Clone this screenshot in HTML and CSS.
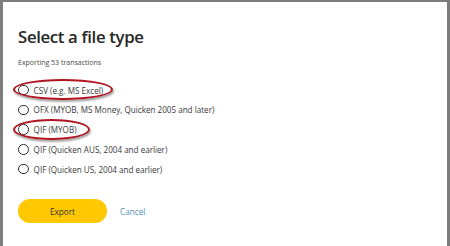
FILE: index.html
```html
<!DOCTYPE html>
<html>
<head>
<meta charset="utf-8">
<link rel="stylesheet" href="styles.css">
</head>
<body>
<div class="backdrop">
  <div class="modal">
    <h1 class="title">Select a file type</h1>
    <p class="subtitle">Exporting 53 transactions</p>
    <div class="options">
      <label class="option"><span class="radio"></span><span class="label">CSV (e.g. MS Excel)</span><span class="ring ring-csv"></span></label>
      <label class="option"><span class="radio"></span><span class="label">OFX (MYOB, MS Money, Quicken 2005 and later)</span></label>
      <label class="option"><span class="radio"></span><span class="label">QIF (MYOB)</span><span class="ring ring-qif"></span></label>
      <label class="option"><span class="radio"></span><span class="label">QIF (Quicken AUS, 2004 and earlier)</span></label>
      <label class="option"><span class="radio"></span><span class="label">QIF (Quicken US, 2004 and earlier)</span></label>
    </div>
    <div class="actions">
      <button class="btn-export">Export</button>
      <a class="btn-cancel">Cancel</a>
    </div>
  </div>
</div>
</body>
</html>
```
FILE: styles.css
```css
html, body {
  margin: 0;
  padding: 0;
  width: 450px;
  height: 246px;
  overflow: hidden;
}
.backdrop {
  width: 450px;
  height: 246px;
  background: #7d7d7d;
  padding: 2px 3px 0 3px;
  box-sizing: border-box;
  display: flex;
}
.modal {
  flex: 1;
  background: #ffffff;
  padding: 24px 0 0 15px;
  font-family: "Open Sans", "Noto Sans", sans-serif;
  color: #2f2f2f;
}
.title {
  margin: 0;
  font-size: 16.8px;
  font-weight: 600;
  line-height: 22px;
  letter-spacing: -0.35px;
  color: #262626;
}
.subtitle {
  margin: 10px 0 0 0;
  font-size: 7px;
  line-height: 10px;
  color: #4a4a4a;
}
.options {
  margin-top: 16px;
  display: flex;
  flex-direction: column;
  gap: 7.8px;
}
.option {
  position: relative;
  display: flex;
  align-items: center;
  gap: 5px;
  height: 12px;
  font-size: 8.1px;
  color: #3a3a3a;
}
.radio {
  width: 8.6px;
  height: 8.6px;
  border: 1.3px solid #2e2e2e;
  border-radius: 50%;
  flex: none;
}
.ring {
  position: absolute;
  left: -5px;
  top: -5px;
  height: 21px;
  border: 2px solid #b0161f;
  border-radius: 50%;
  box-sizing: border-box;
  box-shadow: 1px 2px 2px rgba(0,0,0,0.35);
}
.ring-csv { width: 100px; }
.ring-qif { width: 77px; }
.actions {
  margin-top: 24px;
  display: flex;
  align-items: center;
  gap: 13px;
}
.btn-export {
  width: 89px;
  height: 24px;
  border: none;
  border-radius: 12px;
  background: #ffc800;
  font-family: "Open Sans", "Noto Sans", sans-serif;
  font-size: 8.2px;
  color: #333;
  padding: 0;
}
.btn-cancel {
  font-size: 8.2px;
  color: #4f93b6;
}
```
